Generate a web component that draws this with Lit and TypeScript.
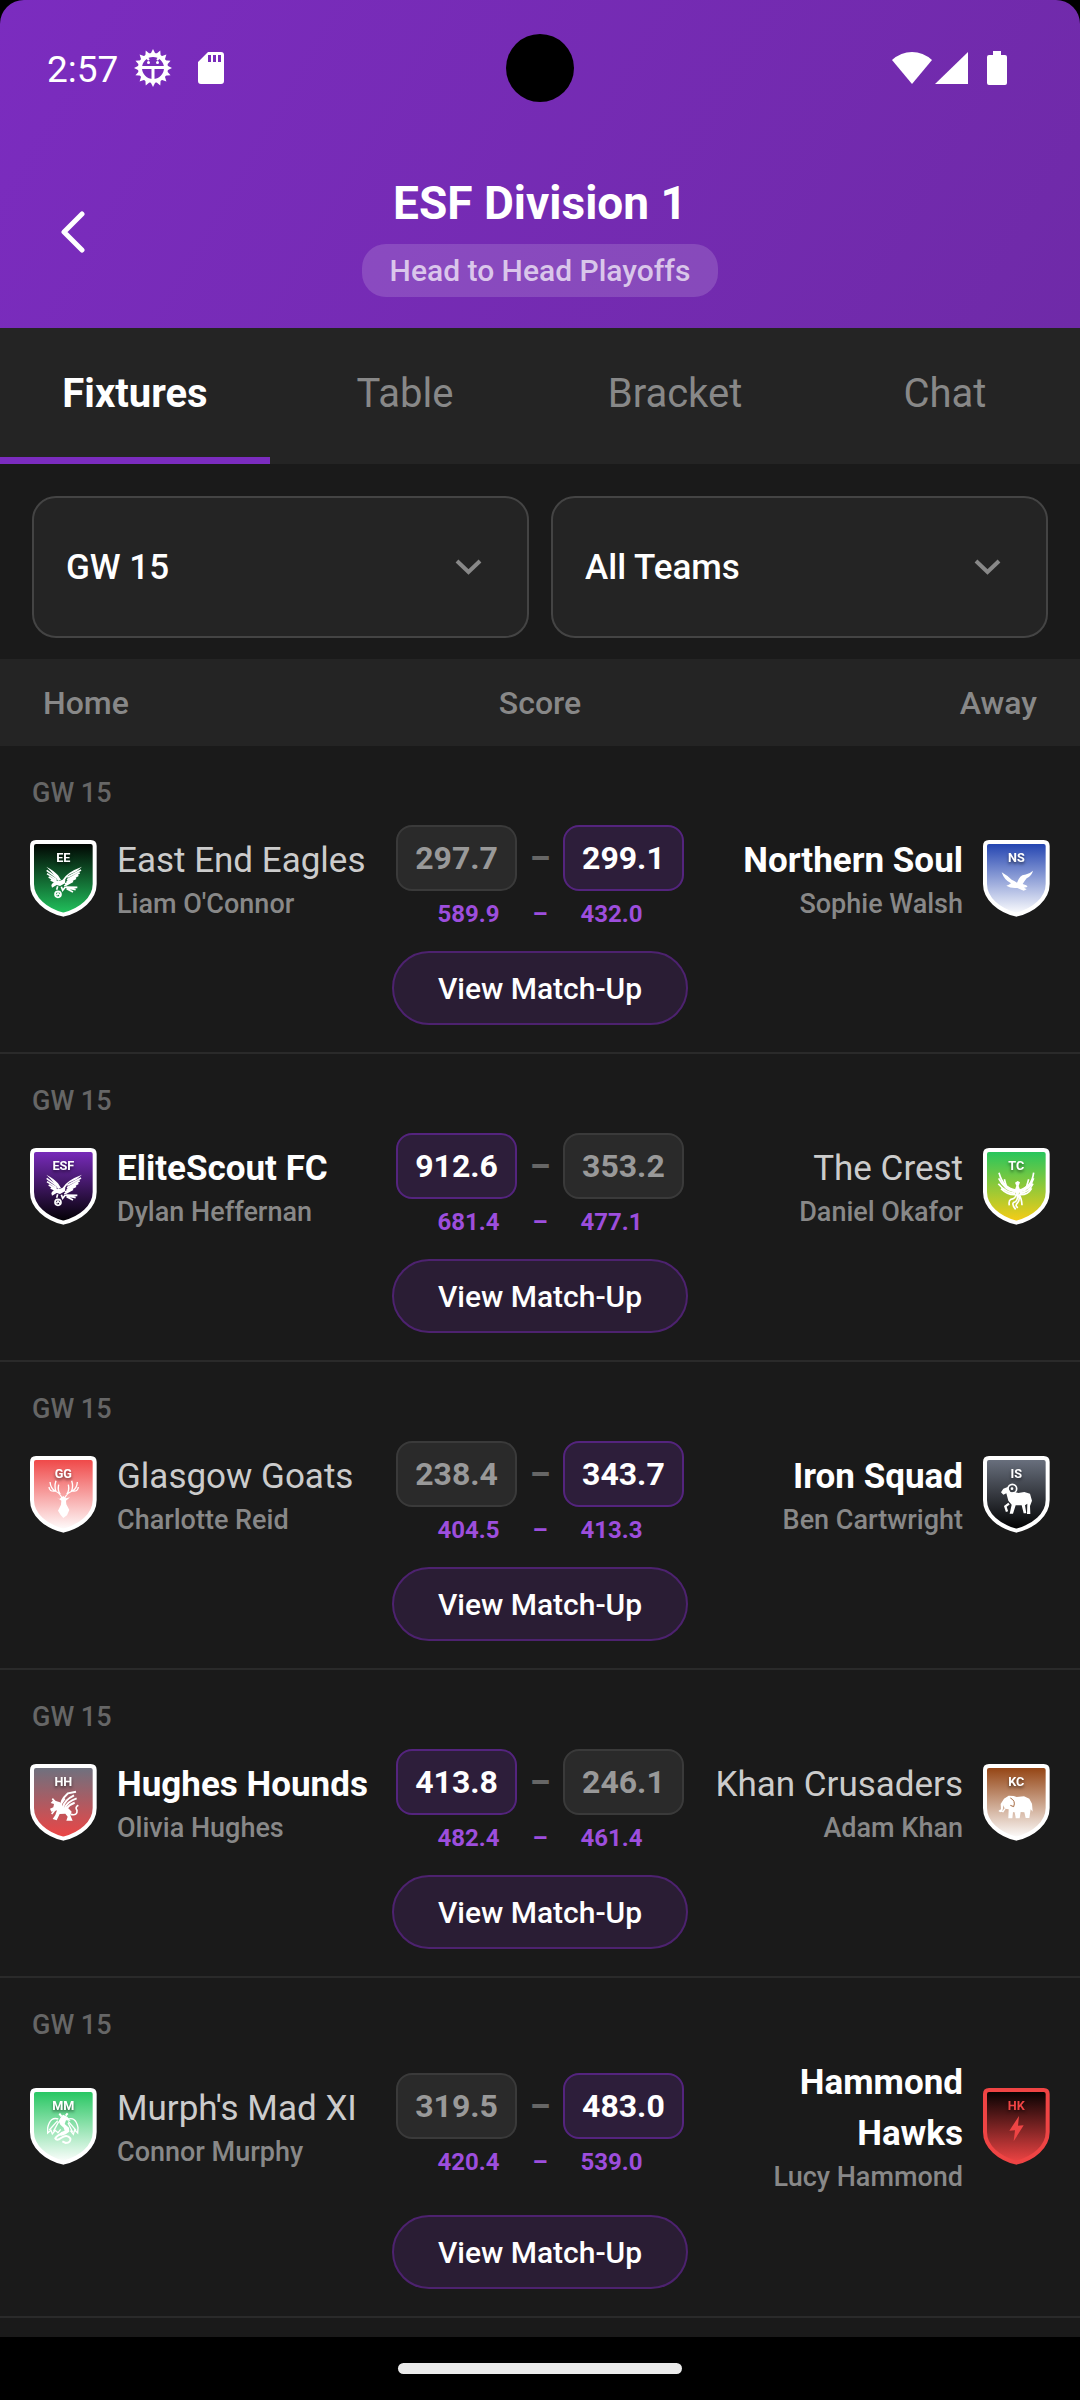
import { LitElement, html, svg, css, type SVGTemplateResult } from 'lit';
import { customElement, property, state } from 'lit/decorators.js';
import { classMap } from 'lit/directives/class-map.js';

type Mascot = 'eagle' | 'gull' | 'phoenix' | 'stag' | 'ram' | 'griffin' | 'elephant' | 'dragon' | 'bolt';

interface Team {
  name: string;
  manager: string;
  initials: string;
  mascot: Mascot;
  from: string;
  to: string;
  trim?: string;
  score: string;
  bench: string;
}

interface Fixture {
  week: string;
  home: Team;
  away: Team;
}

const team = (
  name: string, manager: string, initials: string, mascot: Mascot,
  from: string, to: string, score: string, bench: string, trim = '#ffffff'
): Team => ({ name, manager, initials, mascot, from, to, score, bench, trim });

const FIXTURES: Fixture[] = [
  {
    week: 'GW 15',
    home: team('East End Eagles', "Liam O'Connor", 'EE', 'eagle', '#000000', '#22c55e', '297.7', '589.9'),
    away: team('Northern Soul', 'Sophie Walsh', 'NS', 'gull', '#1e40af', '#ffffff', '299.1', '432.0')
  },
  {
    week: 'GW 15',
    home: team('EliteScout FC', 'Dylan Heffernan', 'ESF', 'eagle', '#7b2cbf', '#000000', '912.6', '681.4'),
    away: team('The Crest', 'Daniel Okafor', 'TC', 'phoenix', '#22c55e', '#facc15', '353.2', '477.1')
  },
  {
    week: 'GW 15',
    home: team('Glasgow Goats', 'Charlotte Reid', 'GG', 'stag', '#ef4444', '#ffffff', '238.4', '404.5'),
    away: team('Iron Squad', 'Ben Cartwright', 'IS', 'ram', '#6b7280', '#000000', '343.7', '413.3')
  },
  {
    week: 'GW 15',
    home: team('Hughes Hounds', 'Olivia Hughes', 'HH', 'griffin', '#6b7280', '#ef4444', '413.8', '482.4'),
    away: team('Khan Crusaders', 'Adam Khan', 'KC', 'elephant', '#92400e', '#ffffff', '246.1', '461.4')
  },
  {
    week: 'GW 15',
    home: team("Murph's Mad XI", 'Connor Murphy', 'MM', 'dragon', '#22c55e', '#ffffff', '319.5', '420.4'),
    away: team('Hammond Hawks', 'Lucy Hammond', 'HK', 'bolt', '#000000', '#ef4444', '483.0', '539.0', '#ef4444')
  }
];

// Mascots share the crest's 200 x 230 canvas
const MASCOTS: Record<Mascot, SVGTemplateResult> = {
  eagle: svg`
    <path d="M49 80Q72 92 84 106L93 120L84 123Q74 104 49 80Z"/>
    <path d="M50 91L80 113M51 101L80 119M56 111L82 125M62 120L82 129" fill="none" stroke="currentColor" stroke-width="5"/>
    <path d="M66 143L64 135Q72 121 88 123L98 119Q112 96 156 80L140 94L116 105L106 118L105 130L90 138L80 135Z"/>
    <path d="M112 112L153 90M111 119L149 98M110 126L145 106M105 132L138 115M103 138L129 124" fill="none" stroke="currentColor" stroke-width="5"/>
    <path d="M107 141L142 142M109 143L137 149M110 146L129 156M94 140L98 151L106 141M83 139L80 149" fill="none" stroke="currentColor" stroke-width="5"/>
    <circle cx="84" cy="163" r="9" fill="none" stroke="currentColor" stroke-width="5"/>
    <path d="M77 163H91M84 157L80 169M84 157L90 169" fill="none" stroke="currentColor" stroke-width="3"/>`,
  gull: svg`
    <path d="M56 97Q72 106 86 119Q96 123 102 128Q111 103 126 104Q140 102 150 92Q146 108 131 115Q124 124 119 132Q134 136 133 141L123 143L131 148L122 152L103 144Q83 146 70 137Q78 135 84 130Q64 121 56 97Z"/>`,
  phoenix: svg`
    <path d="M96 104L104 99L111 103L107 114L113 130L103 143L94 130L100 113Z"/>
    <path d="M98 126Q60 120 48 74M97 131Q66 128 47 91M97 136Q68 134 46 107M98 140Q74 142 54 122M109 126Q146 120 152 74M110 131Q140 128 152 91M110 136Q138 134 150 107M109 140Q134 142 146 121" fill="none" stroke="currentColor" stroke-width="5"/>
    <path d="M64 94L70 115L92 130M137 94L131 115L112 130" fill="none" stroke="currentColor" stroke-width="5"/>
    <path d="M100 138Q98 152 84 154Q76 158 79 172M103 140Q106 160 91 164Q86 170 98 184M106 140Q112 154 104 164Q94 174 105 179M107 138Q116 150 117 172" fill="none" stroke="currentColor" stroke-width="5"/>`,
  stag: svg`
    <path d="M88 129L80 124L94 134L93 146L84 164L92 177L100 186L111 178L118 162L109 145L108 134L120 124L108 127L100 120Z"/>
    <path d="M96 126Q90 111 75 105Q62 97 60 78M75 105Q58 108 57 93M78 106Q72 92 78 74M91 115Q82 104 86 86M104 126Q111 111 127 105Q141 97 142 78M127 105Q144 108 145 93M124 106Q131 92 125 74M110 115Q119 104 115 86" fill="none" stroke="currentColor" stroke-width="4"/>`,
  ram: svg`
    <circle cx="88" cy="98" r="13" fill="none" stroke="currentColor" stroke-width="5"/>
    <circle cx="87" cy="98" r="4"/>
    <path d="M74 93L61 98L54 109L61 116L70 112L76 134L86 146L80 173H90L98 148L116 148L122 172H130L126 148L133 143L132 174H142L141 150L147 134L141 113L124 108L106 111L93 107L84 112Z"/>
    <path d="M78 143L67 151L72 167" fill="none" stroke="currentColor" stroke-width="7"/>`,
  griffin: svg`
    <path d="M80 112L70 108L62 117L72 120L70 130L60 134L64 143L75 141L81 139L76 153L68 165L80 169L89 150L106 149L113 158L109 170H128L121 154L125 143L115 133L97 128L90 115Z"/>
    <path d="M94 130Q88 112 114 88L138 83M99 130Q102 109 132 94M105 132Q111 113 140 103M109 134Q120 120 134 116M92 121L104 103" fill="none" stroke="currentColor" stroke-width="6"/>
    <path d="M122 151Q143 156 141 139Q134 130 145 124M74 112L67 104M73 140L65 150" fill="none" stroke="currentColor" stroke-width="5"/>`,
  elephant: svg`
    <path d="M63 104L77 95L92 96L101 99L123 97L139 104L147 119L149 143L143 136L139 162H128L124 145L113 144L110 163H98L97 146L90 144L88 163H76L77 136L66 134L60 124Q62 141 52 145L46 141L54 136L53 120Z"/>
    <path d="M66 134L60 143L50 139M97 146L101 158" fill="none" stroke="currentColor" stroke-width="4"/>
    <path d="M82 102Q99 110 92 128L82 124" fill="none" stroke="#a4683f" stroke-width="3"/>`,
  dragon: svg`
    <path d="M91 90L99 80L112 86L122 99L108 97L104 108L117 119L118 131L107 139L95 143L84 142L94 132L104 128L101 119L91 110L86 100Z"/>
    <path d="M85 93Q61 85 53 119L53 135L63 127L67 138L76 127L84 134L92 124M83 98L58 126M86 101L70 131M112 94Q137 84 144 119L143 135L134 126L130 139L121 128M115 100L138 127M114 104L128 133" fill="none" stroke="currentColor" stroke-width="4"/>
    <path d="M102 134Q82 141 76 151Q80 160 93 150Q111 138 121 151Q124 164 107 165L97 160M95 86L88 77M107 83L113 76" fill="none" stroke="currentColor" stroke-width="6"/>`,
  bolt: svg`<path d="M108 84L79 128L96 127L92 160L122 112L105 113Z"/>`
};

@customElement('team-crest')
export class TeamCrest extends LitElement {
  @property({ attribute: false }) team!: Team;

  static styles = css`
    :host {
      display: block;
      flex: none;
    }

    svg {
      display: block;
      width: 67px;
      height: 77px;
    }

    .initials {
      font-family: Roboto, sans-serif;
      font-weight: 700;
      font-size: 38px;
      text-anchor: middle;
      filter: drop-shadow(0 6px 4px rgba(0, 0, 0, 0.5));
    }
  `;

  render() {
    const { initials, mascot, from, to, trim } = this.team;
    return html`
      <svg viewBox="0 0 201 231" color=${trim!} fill="currentColor" aria-hidden="true">
        <defs>
          <linearGradient id="fill" x1="0" y1="0" x2="0" y2="1">
            <stop offset="0" stop-color=${from} />
            <stop offset="1" stop-color=${to} />
          </linearGradient>
        </defs>
        <path
          d="M18 6H182Q194 6 194 18V132C194 176 152 211 100 224C48 211 6 176 6 132V18Q6 6 18 6Z"
          fill="url(#fill)"
          stroke="currentColor"
          stroke-width="12"
        />
        <text class="initials" x="100" y="66">${initials}</text>
        ${MASCOTS[mascot]}
      </svg>
    `;
  }
}

@customElement('fixture-row')
export class FixtureRow extends LitElement {
  @property({ attribute: false }) fixture!: Fixture;

  static styles = css`
    :host {
      display: block;
      padding: 30px 30px 27px;
      border-bottom: 2px solid #2a2a2a;
    }

    .week {
      padding-left: 2px;
      font-size: 27px;
      line-height: 34px;
      font-weight: 500;
      color: #666666;
    }

    .match {
      display: grid;
      grid-template-columns: minmax(0, 1fr) 288px minmax(0, 1fr);
      align-items: center;
      gap: 20px;
      margin: 15px 0 20px;
    }

    .team {
      display: flex;
      align-items: center;
      gap: 20px;
    }

    .away {
      flex-direction: row-reverse;
      text-align: right;
    }

    .name {
      font-size: 35px;
      line-height: 51px;
      color: #cccccc;
    }

    .winner .name {
      font-weight: 700;
      color: #ffffff;
    }

    .manager {
      font-size: 27px;
      line-height: 36px;
      font-weight: 500;
      color: #888888;
    }

    .line,
    .bench {
      display: flex;
      align-items: center;
      justify-content: center;
    }

    .line {
      gap: 13px;
      font-size: 32px;
      font-weight: 700;
      color: #666666;
    }

    .dash {
      font-weight: 900;
    }

    .score {
      box-sizing: border-box;
      width: 121px;
      border: 2px solid #3a3a3a;
      border-radius: 16px;
      background: #2a2a2a;
      line-height: 62px;
      text-align: center;
      color: #999999;
    }

    .score.best {
      border-color: #54247e;
      background: #2d1e3a;
      color: #ffffff;
    }

    .bench {
      gap: 33px;
      margin-top: 6px;
      font-size: 24px;
      line-height: 34px;
      font-weight: 700;
      color: #9d4edd;
    }

    .view {
      display: block;
      margin: 0 auto;
      padding: 2px 44px 0;
      border: 2px solid #4d226f;
      border-radius: 37px;
      background: #2a1d34;
      font: 500 30px/68px Roboto, sans-serif;
      color: #ffffff;
      cursor: pointer;
    }
  `;

  private renderTeam(team: Team, side: 'home' | 'away', winner: boolean) {
    return html`
      <div class=${classMap({ team: true, [side]: true, winner })}>
        <team-crest .team=${team}></team-crest>
        <div>
          <div class="name">${team.name}</div>
          <div class="manager">${team.manager}</div>
        </div>
      </div>
    `;
  }

  render() {
    const { week, home, away } = this.fixture;
    const homeWins = Number(home.score) > Number(away.score);
    return html`
      <div class="week">${week}</div>
      <div class="match">
        ${this.renderTeam(home, 'home', homeWins)}
        <div>
          <div class="line">
            <span class=${classMap({ score: true, best: homeWins })}>${home.score}</span>
            <span class="dash">–</span>
            <span class=${classMap({ score: true, best: !homeWins })}>${away.score}</span>
          </div>
          <div class="bench">
            <span>${home.bench}</span>
            <span>–</span>
            <span>${away.bench}</span>
          </div>
        </div>
        ${this.renderTeam(away, 'away', !homeWins)}
      </div>
      <button class="view">View Match-Up</button>
    `;
  }
}

@customElement('status-bar')
export class StatusBar extends LitElement {
  static styles = css`
    :host {
      position: relative;
      display: flex;
      align-items: center;
      justify-content: space-between;
      height: 136px;
      padding: 0 73px 0 47px;
      color: #ffffff;
    }

    .group {
      display: flex;
      align-items: center;
    }

    .time {
      margin-right: 16px;
      padding-top: 4px;
      font-size: 37px;
      line-height: 44px;
    }

    .gear {
      margin-right: 26px;
    }

    .signal {
      margin: 0 19px 0 3px;
    }

    svg {
      display: block;
      fill: currentColor;
    }

    .camera {
      position: absolute;
      top: 34px;
      left: 50%;
      width: 68px;
      height: 68px;
      border-radius: 50%;
      background: #000000;
      transform: translateX(-50%);
    }
  `;

  render() {
    const teeth = Array.from({ length: 16 }, (_, i) => i * 22.5);
    return html`
      <div class="group">
        <span class="time">2:57</span>
        <svg class="gear" width="38" height="38" viewBox="0 0 38 38">
          <circle cx="19" cy="19" r="13" fill="none" stroke="currentColor" stroke-width="4" />
          ${teeth.map((a) => svg`<path d="M16 6L19 0L22 6Z" transform="rotate(${a} 19 19)"/>`)}
          <path d="M6 17H32V20H20.5V32H17.5V20H6Z" />
          <path d="M12 8L15 11M26 8L23 11" stroke="currentColor" stroke-width="2" />
          <circle cx="14.5" cy="13.5" r="1.5" />
          <circle cx="23.5" cy="13.5" r="1.5" />
        </svg>
        <svg width="26" height="32" viewBox="0 0 26 32">
          <path
            fill-rule="evenodd"
            d="M10 0H23Q26 0 26 3V29Q26 32 23 32H3Q0 32 0 29V10ZM10 3V10H13V3ZM15 3V10H18V3ZM20 3V10H23V3Z"
          />
        </svg>
      </div>
      <div class="camera"></div>
      <div class="group">
        <svg width="40" height="34" viewBox="0 0 40 34">
          <path d="M20 33L0 9Q9 1 20 1T40 9Z" />
        </svg>
        <svg class="signal" width="33" height="34" viewBox="0 0 33 34">
          <path d="M33 1V33H0Z" />
        </svg>
        <svg width="20" height="34" viewBox="0 0 20 34">
          <path d="M6 0H14V4H18Q20 4 20 6V32Q20 34 18 34H2Q0 34 0 32V6Q0 4 2 4H6Z" />
        </svg>
      </div>
    `;
  }
}

@customElement('app-root')
export class AppRoot extends LitElement {
  @state() private activeTab = 'Fixtures';

  private tabs = ['Fixtures', 'Table', 'Bracket', 'Chat'];

  static styles = css`
    :host {
      display: flex;
      flex-direction: column;
      min-height: 100vh;
      background: #000000;
      font-family: Roboto, sans-serif;
    }

    header {
      border-radius: 24px 24px 0 0;
      background: linear-gradient(120deg, #7b2cbf, #6f2aa8);
    }

    .app-bar {
      display: grid;
      grid-template-columns: 96px 1fr 96px;
      align-items: center;
      padding: 32px 24px 31px;
      text-align: center;
    }

    .back {
      display: grid;
      place-items: center;
      height: 96px;
      padding: 0;
      border: none;
      background: none;
      color: #ffffff;
      cursor: pointer;
    }

    h1 {
      margin: 0 0 8px;
      padding-top: 2px;
      font-size: 46px;
      line-height: 66px;
      font-weight: 700;
      color: #ffffff;
    }

    .format {
      display: inline-block;
      padding: 0 28px;
      border-radius: 24px;
      background: rgba(255, 255, 255, 0.15);
      font-size: 30px;
      line-height: 53px;
      font-weight: 500;
      color: rgba(255, 255, 255, 0.7);
      vertical-align: top;
    }

    .tabs {
      display: grid;
      grid-template-columns: repeat(4, 1fr);
      background: #242424;
    }

    .tab {
      padding: 2px 0 0;
      border: none;
      border-bottom: 7px solid transparent;
      background: none;
      font: 400 40px/127px Roboto, sans-serif;
      color: #888888;
      cursor: pointer;
    }

    .tab.active {
      border-color: #7b2cbf;
      font-weight: 700;
      color: #ffffff;
    }

    main {
      flex: 1;
      background: #1a1a1a;
    }

    .filters {
      display: grid;
      grid-template-columns: 1fr 1fr;
      gap: 22px;
      padding: 32px 32px 21px;
    }

    .filter {
      display: grid;
      align-items: center;
    }

    .filter > * {
      grid-area: 1 / 1;
    }

    .filter select {
      width: 100%;
      height: 142px;
      padding: 2px 32px 0;
      border: 2px solid #444444;
      border-radius: 24px;
      background: #242424;
      font: 500 35px/48px Roboto, sans-serif;
      color: #ffffff;
      appearance: none;
    }

    .filter svg {
      justify-self: end;
      margin-right: 47px;
      color: #888888;
      pointer-events: none;
    }

    .columns {
      display: grid;
      grid-template-columns: repeat(3, 1fr);
      padding: 2px 43px 0;
      background: #242424;
      font-size: 32px;
      line-height: 85px;
      font-weight: 500;
      color: #888888;
    }

    .center {
      text-align: center;
    }

    .end {
      text-align: right;
    }

    footer {
      display: flex;
      justify-content: center;
      padding: 26px 0;
    }

    .handle {
      width: 284px;
      height: 11px;
      border-radius: 6px;
      background: #ebebeb;
    }
  `;

  private renderFilter(label: string, options: string[]) {
    return html`
      <label class="filter">
        <select aria-label=${label}>
          ${options.map((option) => html`<option>${option}</option>`)}
        </select>
        <svg width="27" height="18" viewBox="0 0 27 18" fill="none" stroke="currentColor" stroke-width="4">
          <path d="M2 3L13.5 14L25 3" />
        </svg>
      </label>
    `;
  }

  render() {
    return html`
      <header>
        <status-bar></status-bar>
        <div class="app-bar">
          <button class="back" aria-label="Back">
            <svg width="26" height="44" viewBox="0 0 26 44" fill="none" stroke="currentColor" stroke-width="5"
              stroke-linecap="round" stroke-linejoin="round">
              <path d="M23 3L5 21L23 39" />
            </svg>
          </button>
          <div>
            <h1>ESF Division 1</h1>
            <span class="format">Head to Head Playoffs</span>
          </div>
        </div>
      </header>
      <nav class="tabs">
        ${this.tabs.map((tab) => html`
          <button
            class=${classMap({ tab: true, active: tab === this.activeTab })}
            @click=${() => (this.activeTab = tab)}
          >${tab}</button>
        `)}
      </nav>
      <main>
        <div class="filters">
          ${this.renderFilter('Game week', ['GW 15', 'GW 16'])}
          ${this.renderFilter('Team', ['All Teams', ...FIXTURES.map((f) => f.home.name)])}
        </div>
        <div class="columns">
          <span>Home</span>
          <span class="center">Score</span>
          <span class="end">Away</span>
        </div>
        ${FIXTURES.map((fixture) => html`<fixture-row .fixture=${fixture}></fixture-row>`)}
      </main>
      <footer><div class="handle"></div></footer>
    `;
  }
}
